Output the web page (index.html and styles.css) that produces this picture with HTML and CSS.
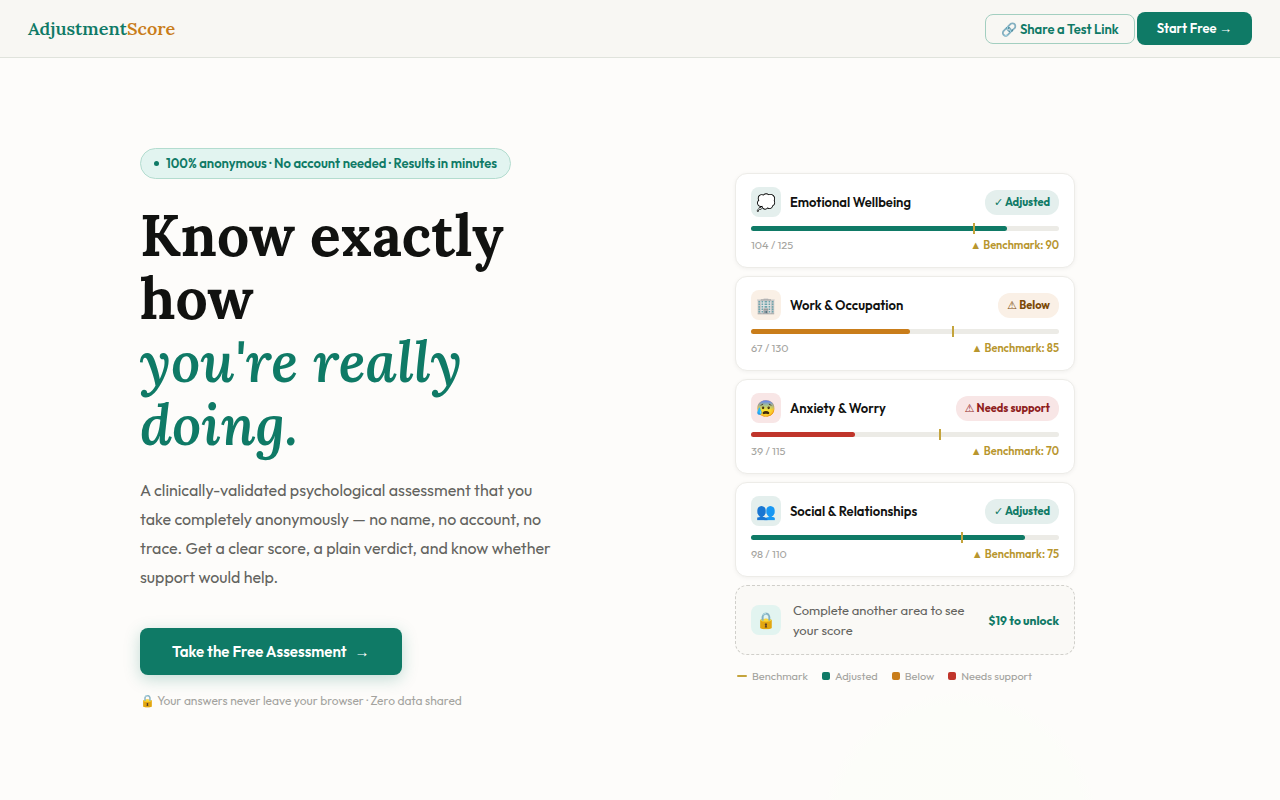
FILE: index.html
```html
<!DOCTYPE html>
<html lang="en">
<head>
  <meta charset="UTF-8" />
  <meta name="viewport" content="width=device-width, initial-scale=1.0"/>
  <title>AdjustmentScore</title>
  <link rel="stylesheet" href="styles.css">
</head>
<body>
  <nav class="nav">
    <a class="logo" href="#">Adjustment<span>Score</span></a>
    <div class="nav-actions">
      <button class="btn-share" type="button">🔗 Share a Test Link</button>
      <button class="btn-start" type="button">Start Free <span class="arrow">→</span></button>
    </div>
  </nav>

  <main class="hero">
    <div class="hero-inner">
      <section class="hero-copy">
        <div class="hero-badge"><span class="dot"></span>100% anonymous · No account needed · Results in minutes</div>
        <h1>Know exactly how<br><em>you're really doing.</em></h1>
        <p class="lead">A clinically-validated psychological assessment that you take completely anonymously — no name, no account, no trace. Get a clear score, a plain verdict, and know whether support would help.</p>
        <button class="btn-cta" type="button">Take the Free Assessment <span class="arrow">→</span></button>
        <p class="note">🔒 Your answers never leave your browser · Zero data shared</p>
      </section>

      <section class="scores">
        <article class="card good">
          <div class="card-head">
            <span class="icon">💭</span>
            <h2>Emotional Wellbeing</h2>
            <span class="tag"><span class="sym">✓</span> Adjusted</span>
          </div>
          <div class="bar">
            <div class="fill" style="width: 83.2%"></div>
            <div class="mark" style="left: 72%"></div>
          </div>
          <div class="card-foot"><span>104 / 125</span><b>▲ Benchmark: 90</b></div>
        </article>

        <article class="card warn">
          <div class="card-head">
            <span class="icon">🏢</span>
            <h2>Work &amp; Occupation</h2>
            <span class="tag"><span class="sym">⚠</span> Below</span>
          </div>
          <div class="bar">
            <div class="fill" style="width: 51.5%"></div>
            <div class="mark" style="left: 65.4%"></div>
          </div>
          <div class="card-foot"><span>67 / 130</span><b>▲ Benchmark: 85</b></div>
        </article>

        <article class="card bad">
          <div class="card-head">
            <span class="icon">😰</span>
            <h2>Anxiety &amp; Worry</h2>
            <span class="tag"><span class="sym">⚠</span> Needs support</span>
          </div>
          <div class="bar">
            <div class="fill" style="width: 33.9%"></div>
            <div class="mark" style="left: 60.9%"></div>
          </div>
          <div class="card-foot"><span>39 / 115</span><b>▲ Benchmark: 70</b></div>
        </article>

        <article class="card good">
          <div class="card-head">
            <span class="icon">👥</span>
            <h2>Social &amp; Relationships</h2>
            <span class="tag"><span class="sym">✓</span> Adjusted</span>
          </div>
          <div class="bar">
            <div class="fill" style="width: 89.1%"></div>
            <div class="mark" style="left: 68.2%"></div>
          </div>
          <div class="card-foot"><span>98 / 110</span><b>▲ Benchmark: 75</b></div>
        </article>

        <div class="locked">
          <span class="icon">🔒</span>
          <p>Complete another area to see your score</p>
          <strong>$19 to unlock</strong>
        </div>

        <ul class="legend">
          <li><i class="line"></i>Benchmark</li>
          <li><i class="green"></i>Adjusted</li>
          <li><i class="amber"></i>Below</li>
          <li><i class="red"></i>Needs support</li>
        </ul>
      </section>
    </div>
  </main>
</body>
</html>
```
FILE: styles.css
```css
:root {
  --green: #0f7a66;
  --amber: #c97d1a;
  --red: #c0352b;
  --gold: #b8962e;
  --ink: #111210;
  --muted: #63635e;
  --faint: #a3a39e;
  --sans: Outfit, Lato, sans-serif;
  --serif: Lora, "Liberation Serif", serif;
}
* {
  box-sizing: border-box;
  margin: 0;
  padding: 0;
}
body {
  background: #fdfcfa;
  color: var(--ink);
  font-family: var(--sans);
}
button {
  font-family: inherit;
  font-weight: 600;
  cursor: pointer;
}
.arrow {
  font-family: "Liberation Sans", sans-serif;
  font-weight: 400;
}
.sym {
  font-family: "DejaVu Sans", sans-serif;
}

.nav {
  display: flex;
  align-items: center;
  justify-content: space-between;
  padding: 12px 28px;
  background: #f8f7f3;
  border-bottom: 1px solid #e0e3dc;
}
.logo {
  font-family: var(--serif);
  font-size: 18px;
  font-weight: 600;
  color: var(--green);
  text-decoration: none;
}
.logo span {
  color: var(--amber);
}
.nav-actions {
  display: flex;
  align-items: center;
  gap: 2px;
}
.btn-share {
  padding: 0 15px;
  font-size: 13px;
  line-height: 28px;
  color: var(--green);
  background: transparent;
  border: 1px solid #a3cfc0;
  border-radius: 8px;
}
.btn-start {
  padding: 0 20px;
  font-size: 13px;
  line-height: 33px;
  color: #fff;
  background: var(--green);
  border: none;
  border-radius: 8px;
}

.hero {
  display: flex;
  align-items: center;
  justify-content: center;
  min-height: calc(100vh - 58px);
  padding: 40px 28px;
  background: radial-gradient(circle at 75% 104%, #fcfdf8 0, #fcfdf9 125px, #fdfcfa 138px);
}
.hero-inner {
  display: grid;
  grid-template-columns: 1fr 1fr;
  gap: 60px;
  align-items: center;
  width: 100%;
  max-width: 1000px;
}

.hero-badge {
  display: inline-flex;
  align-items: center;
  gap: 7px;
  padding: 0 13px;
  font-size: 13px;
  font-weight: 600;
  line-height: 29px;
  color: var(--green);
  background: #e2f4f0;
  border: 1px solid #b3dccf;
  border-radius: 16px;
}
.dot {
  width: 5px;
  height: 5px;
  border-radius: 50%;
  background: var(--green);
}
h1 {
  margin: 25px 0 20px;
  font-family: var(--serif);
  font-size: 57px;
  font-weight: 700;
  line-height: 63px;
}
h1 em {
  font-weight: 600;
  color: var(--green);
}
.lead {
  max-width: 420px;
  margin-bottom: 36px;
  font-size: 16px;
  line-height: 29px;
  color: var(--muted);
}
.btn-cta {
  display: flex;
  align-items: center;
  gap: 8px;
  padding: 0 32px;
  font-size: 15px;
  line-height: 47px;
  color: #fff;
  background: var(--green);
  border: none;
  border-radius: 8px;
  box-shadow: 0 4px 16px rgba(15, 122, 102, 0.25);
}
.note {
  margin-top: 16px;
  font-size: 12px;
  line-height: 20px;
  color: var(--faint);
}

.scores {
  display: flex;
  flex-direction: column;
  gap: 8px;
  width: 100%;
  max-width: 340px;
  margin: 0 auto;
}
.card {
  padding: 13px 15px;
  background: #fff;
  border: 1px solid #edece8;
  border-radius: 12px;
  box-shadow: 0 1px 4px rgba(0, 0, 0, 0.05);
}
.card-head {
  display: flex;
  align-items: center;
  gap: 9px;
  margin-bottom: 9px;
}
.icon {
  flex: none;
  width: 30px;
  height: 30px;
  border-radius: 8px;
  font-size: 16px;
  line-height: 30px;
  text-align: center;
}
h2 {
  flex: 1;
  font-size: 13px;
  font-weight: 600;
}
.tag {
  padding: 0 9px;
  border-radius: 12px;
  font-size: 11px;
  font-weight: 700;
  line-height: 24px;
}
.good .icon,
.good .tag {
  background: #e4efed;
  color: var(--green);
}
.warn .icon,
.warn .tag {
  background: #faf0e6;
  color: #7c4a08;
}
.bad .icon,
.bad .tag {
  background: #f8e6e6;
  color: #8f1d1d;
}
.bar {
  position: relative;
  height: 5px;
  margin-bottom: 5px;
  background: #ecebe6;
  border-radius: 3px;
}
.fill {
  height: 5px;
  border-radius: 3px;
  background: var(--green);
}
.warn .fill {
  background: var(--amber);
}
.bad .fill {
  background: var(--red);
}
/* benchmark tick sticks out above and below the bar */
.mark {
  position: absolute;
  top: -3px;
  width: 2px;
  height: 11px;
  background: #c4a43c;
}
.card-foot {
  display: flex;
  justify-content: space-between;
  font-size: 11px;
  line-height: 18px;
  color: var(--faint);
}
.card-foot b {
  font-weight: 600;
  color: var(--gold);
}

.locked {
  display: flex;
  align-items: center;
  gap: 12px;
  padding: 14px 15px;
  background: #faf9f6;
  border: 1px dashed #d0cfca;
  border-radius: 12px;
}
.locked .icon {
  background: #e2f4f0;
}
.locked p {
  flex: 1;
  font-size: 13px;
  line-height: 20px;
  color: var(--muted);
}
.locked strong {
  font-size: 12px;
  color: var(--green);
}

.legend {
  display: flex;
  flex-wrap: wrap;
  gap: 14px;
  margin-top: 4px;
  padding: 0 2px;
  list-style: none;
  font-size: 11px;
  line-height: 18px;
  color: var(--faint);
}
.legend li {
  display: flex;
  align-items: center;
  gap: 5px;
}
.legend i {
  width: 8px;
  height: 8px;
  border-radius: 2px;
}
.legend .line {
  width: 10px;
  height: 2px;
  background: #c4a43c;
}
.legend .green {
  background: var(--green);
}
.legend .amber {
  background: var(--amber);
}
.legend .red {
  background: var(--red);
}
```
